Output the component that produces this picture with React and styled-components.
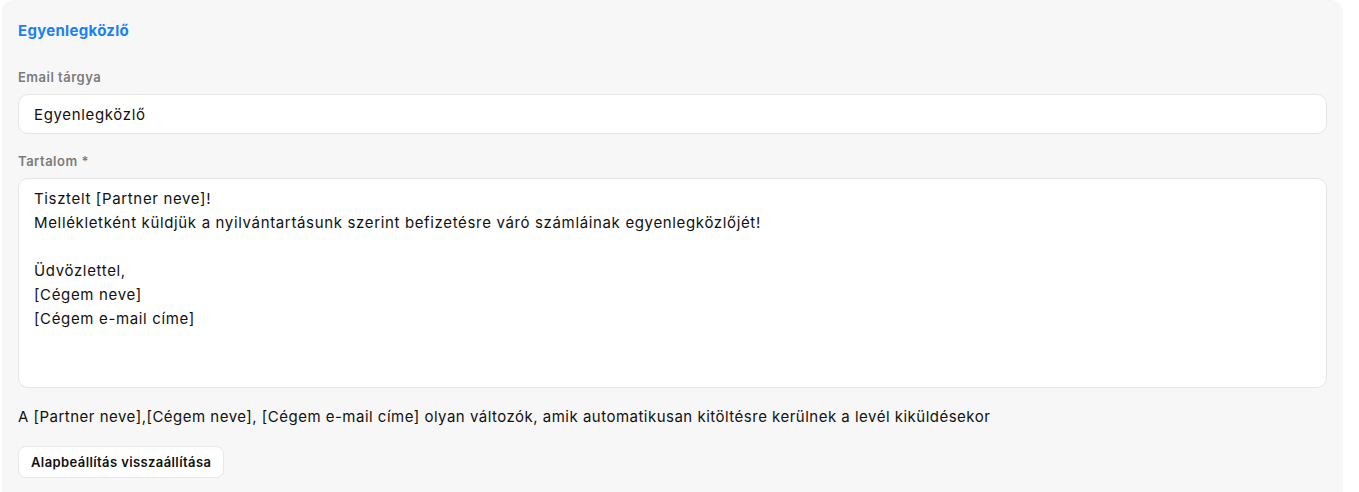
import React from "react";
import styled, { createGlobalStyle } from "styled-components";

const GlobalStyle = createGlobalStyle`
  html, body {
    margin: 0;
    padding: 0;
    background: #ffffff;
    font-family: Inter, "Noto Sans", "Liberation Sans", sans-serif;
    color: #111111;
  }
`;

const defaultBody = `Tisztelt [Partner neve]!
Mellékletként küldjük a nyilvántartásunk szerint befizetésre váró számláinak egyenlegközlőjét!

Üdvözlettel,
[Cégem neve]
[Cégem e-mail címe]`;

const App = () => {
  const [subject, setSubject] = React.useState("Egyenlegközlő");
  const [body, setBody] = React.useState(defaultBody);

  const reset = () => {
    setSubject("Egyenlegközlő");
    setBody(defaultBody);
  };

  return (
    <>
      <GlobalStyle />
      <Page>
        <Panel>
          <Title>Egyenlegközlő</Title>
          <Field>
            <Label>Email tárgya</Label>
            <TextInput
              type="text"
              value={subject}
              onChange={(e) => setSubject(e.target.value)}
            />
          </Field>
          <Field>
            <Label>Tartalom *</Label>
            <TextArea value={body} onChange={(e) => setBody(e.target.value)} />
          </Field>
          <Hint>
            A [Partner neve],[Cégem neve], [Cégem e-mail címe] olyan változók,
            amik automatikusan kitöltésre kerülnek a levél kiküldésekor
          </Hint>
          <ResetButton onClick={reset}>Alapbeállítás visszaállítása</ResetButton>
        </Panel>
      </Page>
    </>
  );
};

export default App;

const Page = styled.div`
  padding: 0 16px 0 2px;
`;

const Panel = styled.div`
  background-color: #f7f7f7;
  border-radius: 12px;
  padding: 21px 16px 24px 16px;
  display: flex;
  flex-direction: column;
  align-items: flex-start;
  min-height: 500px;
  box-sizing: border-box;
`;

const Title = styled.h2`
  margin: 0 0 27px 0;
  font-size: 15px;
  font-weight: 700;
  line-height: 20px;
  letter-spacing: 0.3px;
  color: #1a80f5;
`;

const Field = styled.div`
  display: flex;
  flex-direction: column;
  gap: 8px;
  width: 100%;
  margin-bottom: 18px;
`;

const Label = styled.label`
  font-size: 13px;
  font-weight: 600;
  line-height: 18px;
  letter-spacing: 0.5px;
  color: #7c7c7c;
`;

const TextInput = styled.input`
  box-sizing: border-box;
  width: 100%;
  height: 40px;
  padding: 0 15px;
  font-family: inherit;
  font-size: 15px;
  letter-spacing: 0.65px;
  color: #111111;
  background: #ffffff;
  border: 1px solid #e6e6e6;
  border-radius: 10px;
  outline: none;
`;

const TextArea = styled.textarea`
  box-sizing: border-box;
  width: 100%;
  height: 210px;
  padding: 8px 15px;
  font-family: inherit;
  font-size: 15px;
  line-height: 24px;
  letter-spacing: 0.65px;
  color: #111111;
  background: #ffffff;
  border: 1px solid #e6e6e6;
  border-radius: 10px;
  outline: none;
  resize: none;
`;

const Hint = styled.p`
  margin: 0 0 18px 0;
  font-size: 15px;
  line-height: 22px;
  letter-spacing: 0.49px;
  color: #111111;
`;

const ResetButton = styled.button`
  height: 32px;
  padding: 0 12px;
  font-family: inherit;
  font-size: 13px;
  font-weight: 600;
  letter-spacing: 0.4px;
  color: #111111;
  background: #ffffff;
  border: 1px solid #e8e8e8;
  border-radius: 8px;
  cursor: pointer;
`;
